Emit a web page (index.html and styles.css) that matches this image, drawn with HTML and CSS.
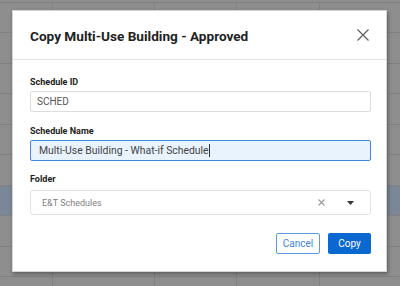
FILE: index.html
```html
<!DOCTYPE html>
<html>
<head>
<meta charset="utf-8">
<link rel="stylesheet" href="styles.css">
</head>
<body>
<div class="backdrop">
  <div class="row"><div class="c c1"></div><div class="c c2"></div><div class="c c3"></div><div class="c c4"></div><div class="c c5"></div></div>
  <div class="row"><div class="c c1"></div><div class="c c2"></div><div class="c c3"></div><div class="c c4"></div><div class="c c5"></div></div>
  <div class="row"><div class="c c1"></div><div class="c c2"></div><div class="c c3"></div><div class="c c4"></div><div class="c c5"></div></div>
  <div class="row"><div class="c c1"></div><div class="c c2"></div><div class="c c3"></div><div class="c c4"></div><div class="c c5"></div></div>
  <div class="row"><div class="c c1"></div><div class="c c2"></div><div class="c c3"></div><div class="c c4"></div><div class="c c5"></div></div>
  <div class="row"><div class="c c1"></div><div class="c c2"></div><div class="c c3"></div><div class="c c4"></div><div class="c c5"></div></div>
  <div class="row sel"><div class="c c1"></div><div class="c c2"></div><div class="c c3"></div><div class="c c4"></div><div class="c c5"></div></div>
  <div class="row"><div class="c c1"></div><div class="c c2"></div><div class="c c3"></div><div class="c c4"></div><div class="c c5"></div></div>
  <div class="row"><div class="c c1"></div><div class="c c2"></div><div class="c c3"></div><div class="c c4"></div><div class="c c5"></div></div>
  <div class="row last"><div class="c c1"></div><div class="c c2"></div><div class="c c3"></div><div class="c c4"></div><div class="c c5"></div></div>
</div>
<div class="dialog">
  <div class="header">
    <div class="title">Copy Multi-Use Building - Approved</div>
    <svg class="close" width="12" height="12" viewBox="0 0 12 12"><path d="M0.5 0.5 L11.5 11.5 M11.5 0.5 L0.5 11.5" stroke="#5f5f5f" stroke-width="1.2" fill="none"/></svg>
  </div>
  <div class="body">
    <div class="label">Schedule ID</div>
    <div class="input">SCHED</div>
    <div class="label l2">Schedule Name</div>
    <div class="input focus"><span class="caret">Multi-Use Building - What-if Schedule</span></div>
    <div class="label l3">Folder</div>
    <div class="select">
      <span class="sel-text">E&amp;T Schedules</span>
      <svg class="clear" width="7" height="7" viewBox="0 0 7 7"><path d="M0.5 0.5 L6.5 6.5 M6.5 0.5 L0.5 6.5" stroke="#9a9a9a" stroke-width="1.1" fill="none"/></svg>
      <svg class="arrow" width="7" height="4" viewBox="0 0 7 4"><path d="M0 0 L7 0 L3.5 4 Z" fill="#333"/></svg>
    </div>
    <div class="footer">
      <div class="btn cancel">Cancel</div>
      <div class="btn copy">Copy</div>
    </div>
  </div>
</div>
</body>
</html>
```

FILE: styles.css
```css
html, body {
  margin: 0;
  padding: 0;
}
body {
  width: 400px;
  height: 286px;
  overflow: hidden;
  background: #8e8e8e;
  font-family: Roboto, "Liberation Sans", sans-serif;
  position: relative;
}
.backdrop {
  display: flex;
  flex-direction: column;
  padding-top: 1.5px;
}
.row {
  display: flex;
  height: 30.5px;
  box-sizing: border-box;
  border-top: 1px solid #818181;
}
.row.last {
  height: 10px;
}
.row.sel {
  background: #7b8797;
}
.c {
  border-right: 1px solid #818181;
}
.c1 { width: 52px; }
.c2 { width: 101px; }
.c3 { width: 81px; }
.c4 { width: 82px; }
.c5 { flex: 1; border-right: none; }

.dialog {
  position: absolute;
  left: 12px;
  top: 10px;
  width: 373px;
  height: 260px;
  background: #fff;
  border: 1px solid #d4d4d4;
  box-shadow: 1px 2px 4px rgba(0,0,0,0.35);
  display: flex;
  flex-direction: column;
}
.header {
  height: 48px;
  border-bottom: 1px solid #e4e4e4;
  display: flex;
  align-items: center;
  justify-content: space-between;
  padding: 0 17px 0 17px;
}
.title {
  font-size: 13.6px;
  font-weight: bold;
  color: #222;
  padding-top: 2px;
}
.close {
  display: block;
}
.body {
  display: flex;
  flex-direction: column;
  padding: 16px 15px 0 17px;
}
.label {
  font-size: 9px;
  line-height: 12px;
  font-weight: bold;
  color: #222;
  margin-bottom: 3px;
}
.l2 { margin-top: 13px; }
.l3 { margin-top: 12px; margin-bottom: 5px; }
.input {
  height: 21px;
  box-sizing: border-box;
  border: 1px solid #dcdcdc;
  border-radius: 2px;
  display: flex;
  align-items: center;
  padding-left: 6px;
  font-size: 10px;
  color: #555;
}
.input.focus {
  border: 1.5px solid #3d8be0;
  background: #e9f3fd;
  padding-left: 8px;
  color: #444;
  font-size: 10.4px;
}
.caret {
  border-right: 1px solid #333;
  line-height: 13px;
}
.select {
  height: 25px;
  box-sizing: border-box;
  border: 1px solid #e2e2e2;
  border-radius: 3px;
  display: flex;
  align-items: center;
  padding-left: 11px;
  font-size: 9px;
  color: #808080;
}
.sel-text {
  flex: 1;
}
.clear {
  display: block;
  margin-right: 22px;
}
.arrow {
  display: block;
  margin-right: 16px;
}
.footer {
  display: flex;
  justify-content: flex-end;
  gap: 8px;
  margin-top: 18px;
}
.btn {
  height: 21px;
  box-sizing: border-box;
  border-radius: 2px;
  display: flex;
  align-items: center;
  justify-content: center;
  font-size: 10px;
}
.cancel {
  width: 44px;
  border: 1px solid #5a9be3;
  color: #3f86d8;
  background: #fff;
}
.copy {
  width: 43px;
  background: #0a68d0;
  color: #fff;
}
```
